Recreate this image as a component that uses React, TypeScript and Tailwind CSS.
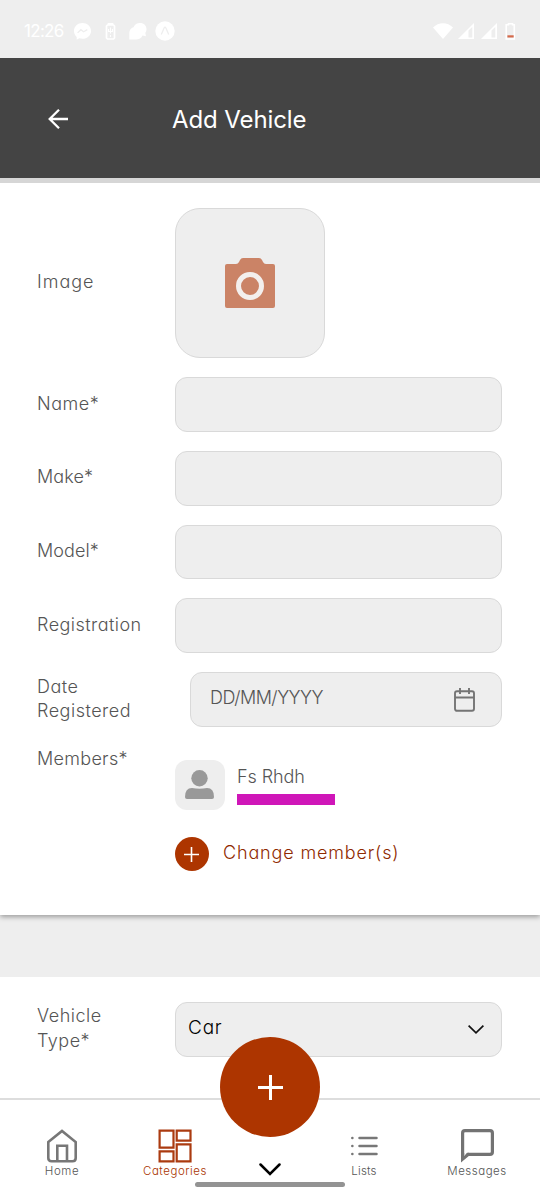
import type { ReactNode } from 'react';

const LABEL = 'text-[18px] leading-[24.5px] font-light text-[#555555]';

function StatusBar() {
  return (
    <div className="flex h-[58px] items-start justify-between bg-[#eeeeee] pr-[24px] pl-[24px] text-white">
      <div className="flex h-[62px] items-center">
        <span className="w-[50px] pt-[2px] text-[17px] whitespace-nowrap tracking-[-0.7px]">12:26</span>
        <svg width="17" height="17" viewBox="0 0 17 17">
          <path fill="currentColor" d="M8.5 0C3.7 0 0 3.4 0 8c0 2.400 1 4.400 2.700 5.900V16.700l2.600-1.400c1 .3 2.100.5 3.200.5 4.800 0 8.500-3.300 8.500-7.800S13.300 0 8.500 0Z" />
          <path d="m3.600 9.900 3.300-3.200 2.700 2 3.700-2.100" fill="none" stroke="#eeeeee" strokeWidth="1.300" />
        </svg>
        <svg className="ml-[14px]" width="11" height="17" viewBox="0 0 11 17" fill="none" stroke="currentColor" strokeWidth="1.700">
          <path d="M3.500 2V.8h4V2M2.500 2h6l1 1v12l-1 1h-6l-1-1V3Z" />
          <path d="M5.500 4.500v6M3.500 6v2.500h4V6M5.500 12v2" strokeWidth="1.100" />
        </svg>
        <svg className="ml-[13px]" width="18" height="17" viewBox="0 0 18 17" fill="currentColor">
          <path d="M11 0c4 0 6.500 2.700 6.500 6.200 0 1.500-.4 2.700-1.200 3.700l.7 3.400-3.500-.8C12.500 15 10 16.500 7 16.500H.3V9.800C.3 7 2 4.900 4.500 4.200 5.500 1.600 8 0 11 0Z" />
        </svg>
        <svg className="ml-[8px]" width="20" height="20" viewBox="0 0 20 20">
          <circle cx="10" cy="10" r="9.700" fill="currentColor" />
          <path d="M6.300 13.500 9.100 7q.9-1.500 1.800 0l2.800 6.500" fill="none" stroke="#eeeeee" strokeWidth="1.300" />
        </svg>
      </div>
      <div className="flex h-[62px] items-center">
        <svg width="20" height="16" viewBox="0 0 20 16" fill="currentColor">
          <path d="M0 4.500C5.500-1.300 14.500-1.300 20 4.500L10 16Z" />
        </svg>
        <svg className="ml-[5px]" width="16" height="16" viewBox="0 0 16 16">
          <path d="M0 16 16 0v16Z" fill="currentColor" />
          <path d="M10.500 7.500 14.300 4v10.500h-3.800Z" fill="#eeeeee" />
        </svg>
        <svg className="ml-[7px]" width="16" height="16" viewBox="0 0 16 16">
          <path d="M0 16 16 0v16Z" fill="currentColor" />
          <path d="M10.500 7.500 14.300 4v10.500h-3.800Z" fill="#eeeeee" />
        </svg>
        <svg className="ml-[8px]" width="11" height="17" viewBox="0 0 11 17">
          <path d="M3.500 1.800V.8h4v1h1.800v14.200H1.200V1.800Z" fill="none" stroke="currentColor" strokeWidth="1.600" />
          <path d="M2.400 12.300h6.300v2.200H2.400Z" fill="#d4694a" />
        </svg>
      </div>
    </div>
  );
}

function Header() {
  return (
    <header className="relative z-10 flex h-[125px] shrink-0 items-center border-b-[5px] border-[#d6d6d6] bg-[#444444] pl-[48px] text-white">
      <svg className="mt-[2px]" width="20" height="20" viewBox="0 0 20 20" fill="none" stroke="currentColor" strokeWidth="2.300">
        <path d="M20 10H1.700M11 .8 1.700 10l9.300 9.200" />
      </svg>
      <h1 className="ml-[104px] pt-[3px] text-[24px] leading-[30px] font-normal tracking-[-0.1px] whitespace-nowrap">Add Vehicle</h1>
    </header>
  );
}

function TextRow({ label, tracking }: { label: string; tracking: string }) {
  return (
    <div className="flex h-[54.75px] items-center">
      <label className={`${LABEL} ${tracking} w-[138px] pb-[1px] whitespace-nowrap`}>{label}</label>
      <input aria-label={label} className="h-full w-[327px] rounded-[12px] border border-[#d9d9d9] bg-[#eeeeee] px-3" />
    </div>
  );
}

function Tab({ label, className, children }: { label: string; className: string; children: ReactNode }) {
  return (
    <div className={`flex flex-col items-center ${className}`}>
      <div className="flex h-[34px] items-center">{children}</div>
      <span className="mt-[1px] text-[11.5px] leading-[14px] font-light whitespace-nowrap">{label}</span>
    </div>
  );
}

export default function App() {
  return (
    <div className="flex h-[1200px] w-[540px] flex-col overflow-hidden bg-[#eeeeee] font-[Inter,sans-serif] [font-feature-settings:'cv11']">
      <StatusBar />
      <Header />

      <section className="relative h-[732px] shrink-0 bg-white pt-[25px] pl-[37px] shadow-[0_2px_5px_rgba(0,0,0,0.35)]">
        <div className="flex h-[150px] items-center">
          <span className={`${LABEL} w-[138px] pb-[1px] tracking-[1px]`}>Image</span>
          <div className="flex size-[150px] items-center justify-center rounded-[25px] border border-[#d9d9d9] bg-[#eeeeee]">
            <svg width="50" height="50" viewBox="0 0 50 50">
              <path d="M2 6h9q2 0 3-2l1-2q1-2 3-2h16q2 0 3 2l1 2q1 2 3 2h7q2 0 2 2v40q0 2-2 2H2q-2 0-2-2V8q0-2 2-2Z" fill="#cb8366" />
              <circle cx="25" cy="28" r="11.500" fill="none" stroke="#f3efed" strokeWidth="5" />
            </svg>
          </div>
        </div>

        <div className="mt-[19px] flex flex-col gap-[19px]">
          <TextRow label="Name*" tracking="tracking-[0.5px]" />
          <TextRow label="Make*" tracking="tracking-[0.1px]" />
          <TextRow label="Model*" tracking="tracking-[0.1px]" />
          <TextRow label="Registration" tracking="tracking-[0.45px]" />
          <div className="flex h-[55px] items-center">
            <span className={`${LABEL} w-[153px] pb-[1px] tracking-[0.5px]`}>
              Date
              <br />
              Registered
            </span>
            <div className="flex h-full w-[312px] items-center justify-between rounded-[12px] border border-[#d9d9d9] bg-[#eeeeee] pr-[26px] pl-[19px]">
              <span className={`${LABEL} pb-[2px] tracking-[-0.5px]`}>DD/MM/YYYY</span>
              <svg className="mt-[1px]" width="21" height="24" viewBox="0 0 21 24" fill="none" stroke="#747474" strokeWidth="1.900">
                <rect x="1" y="3.200" width="19" height="19.600" rx="2" />
                <path d="M1 9.500h19M6 0v6M15 0v6" />
              </svg>
            </div>
          </div>
        </div>

        <div className="mt-[19px] flex">
          <span className={`${LABEL} w-[138px] pt-[1px] tracking-[0.3px]`}>Members*</span>
          <div className="pt-[14px]">
            <div className="flex h-[50px]">
              <div className="flex size-[50px] items-center justify-center rounded-[12px] bg-[#eeeeee]">
                <svg width="30" height="30" viewBox="0 0 30 30" fill="#999999">
                  <circle cx="14.500" cy="8.200" r="8.200" />
                  <path d="M0 27q0-9 7-9q7.500 1.500 15 0q7 0 7 9q0 2-2 2H2q-2 0-2-2Z" />
                </svg>
              </div>
              <div className="ml-[12px] pt-[5px]">
                <div className={`${LABEL} tracking-[-0.1px]`}>Fs Rhdh</div>
                <div className="mt-[4.500px] h-[11px] w-[98px] bg-[#cf16b8]" />
              </div>
            </div>
            <div className="mt-[27px] flex h-[34px] items-center">
              <div className="flex size-[34px] items-center justify-center rounded-full bg-[#ad3500]">
                <svg className="mr-[1px]" width="15" height="15" viewBox="0 0 15 15" stroke="white" strokeWidth="1.600">
                  <path d="M7.500 0v15M0 7.500h15" />
                </svg>
              </div>
              <span className="ml-[14px] pb-[3px] text-[18px] leading-[24px] font-light tracking-[0.85px] whitespace-nowrap text-[#8f2a00]">Change member(s)</span>
            </div>
          </div>
        </div>
      </section>

      <section className="mt-[62px] flex h-[121px] shrink-0 bg-white pt-[25px] pl-[37px]">
        <span className={`${LABEL} w-[138px] pt-[2px] tracking-[0.5px]`}>
          Vehicle
          <br />
          Type*
        </span>
        <div className="flex h-[55px] w-[327px] items-center justify-between rounded-[12px] border border-[#d9d9d9] bg-[#eeeeee] pr-[17px] pl-[12px]">
          <span className="pb-[3px] text-[19px] leading-[24px] font-light tracking-[0.8px] text-black">Car</span>
          <svg width="16" height="9" viewBox="0 0 16 9" fill="none" stroke="#111111" strokeWidth="1.700">
            <path d="m.6.6 7.400 7.200L15.400.6" />
          </svg>
        </div>
      </section>

      <nav className="relative flex h-[102px] shrink-0 border-t-2 border-[#dddddd] bg-white pt-[29px] text-[#555555]">
        <Tab label="Home" className="ml-[5px] w-[114px] tracking-[0.6px]">
          <svg width="30" height="34" viewBox="0 0 30 34" fill="none" stroke="#777777" strokeWidth="2.600">
            <path d="M1.300 13 15 2l13.700 11V29q0 3.200-3.200 3.200H4.500q-3.200 0-3.200-3.200Z" />
            <path d="M10.300 32V16.800h9.700V32" />
          </svg>
        </Tab>
        <Tab label="Categories" className="w-[112px] tracking-[0.55px] text-[#a93400]">
          <svg width="34" height="34" viewBox="0 0 34 34" fill="none" stroke="#ab3b10" strokeWidth="2.200">
            <path d="M1.600 1.600H15.500V18.700H1.600ZM18.700 1.600H32.500V11.700H18.700ZM1.600 22.300H15.500V32.300H1.600ZM18.700 15.300H32.500V32.300H18.700Z" />
          </svg>
        </Tab>
        <div className="absolute top-[-63px] left-[220px] flex size-[100px] items-center justify-center rounded-full bg-[#ad3500]">
          <svg width="25" height="25" viewBox="0 0 25 25" stroke="white" strokeWidth="3">
            <path d="M12.500 0v25M0 12.500h25" />
          </svg>
        </div>
        <div className="absolute bottom-0 left-[195px] flex w-[150px] flex-col items-center pb-[13px]">
          <svg className="mb-[6px]" width="22" height="13" viewBox="0 0 22 13" fill="none" stroke="black" strokeWidth="2.500" strokeLinecap="round">
            <path d="m1.500 1.500 9.500 9.500 9.500-9.500" />
          </svg>
          <div className="h-[5px] w-full rounded-full bg-[#939393]" />
        </div>
        <Tab label="Lists" className="ml-[76px] w-[114px] tracking-[0.2px]">
          <svg width="28" height="22" viewBox="0 0 28 22" fill="none" stroke="#777777" strokeWidth="2.500" strokeLinecap="round">
            <path d="M9.500 3h17M9.500 11h17M9.500 19h17M2.300 3h.1M2.300 11h.1M2.300 19h.1" />
          </svg>
        </Tab>
        <Tab label="Messages" className="w-[112px] tracking-[0.5px]">
          <svg className="ml-[1px]" width="33" height="34" viewBox="0 0 33 34">
            <path d="M1.600 26V4q0-2.400 2.400-2.400h25q2.400 0 2.400 2.400v19q0 2.400-2.400 2.400H7" fill="none" stroke="#737373" strokeWidth="3.200" />
            <path d="M0 24v9.500L7.800 27V23.800H6L3.200 27v-3Z" fill="#737373" />
          </svg>
        </Tab>
      </nav>
    </div>
  );
}
